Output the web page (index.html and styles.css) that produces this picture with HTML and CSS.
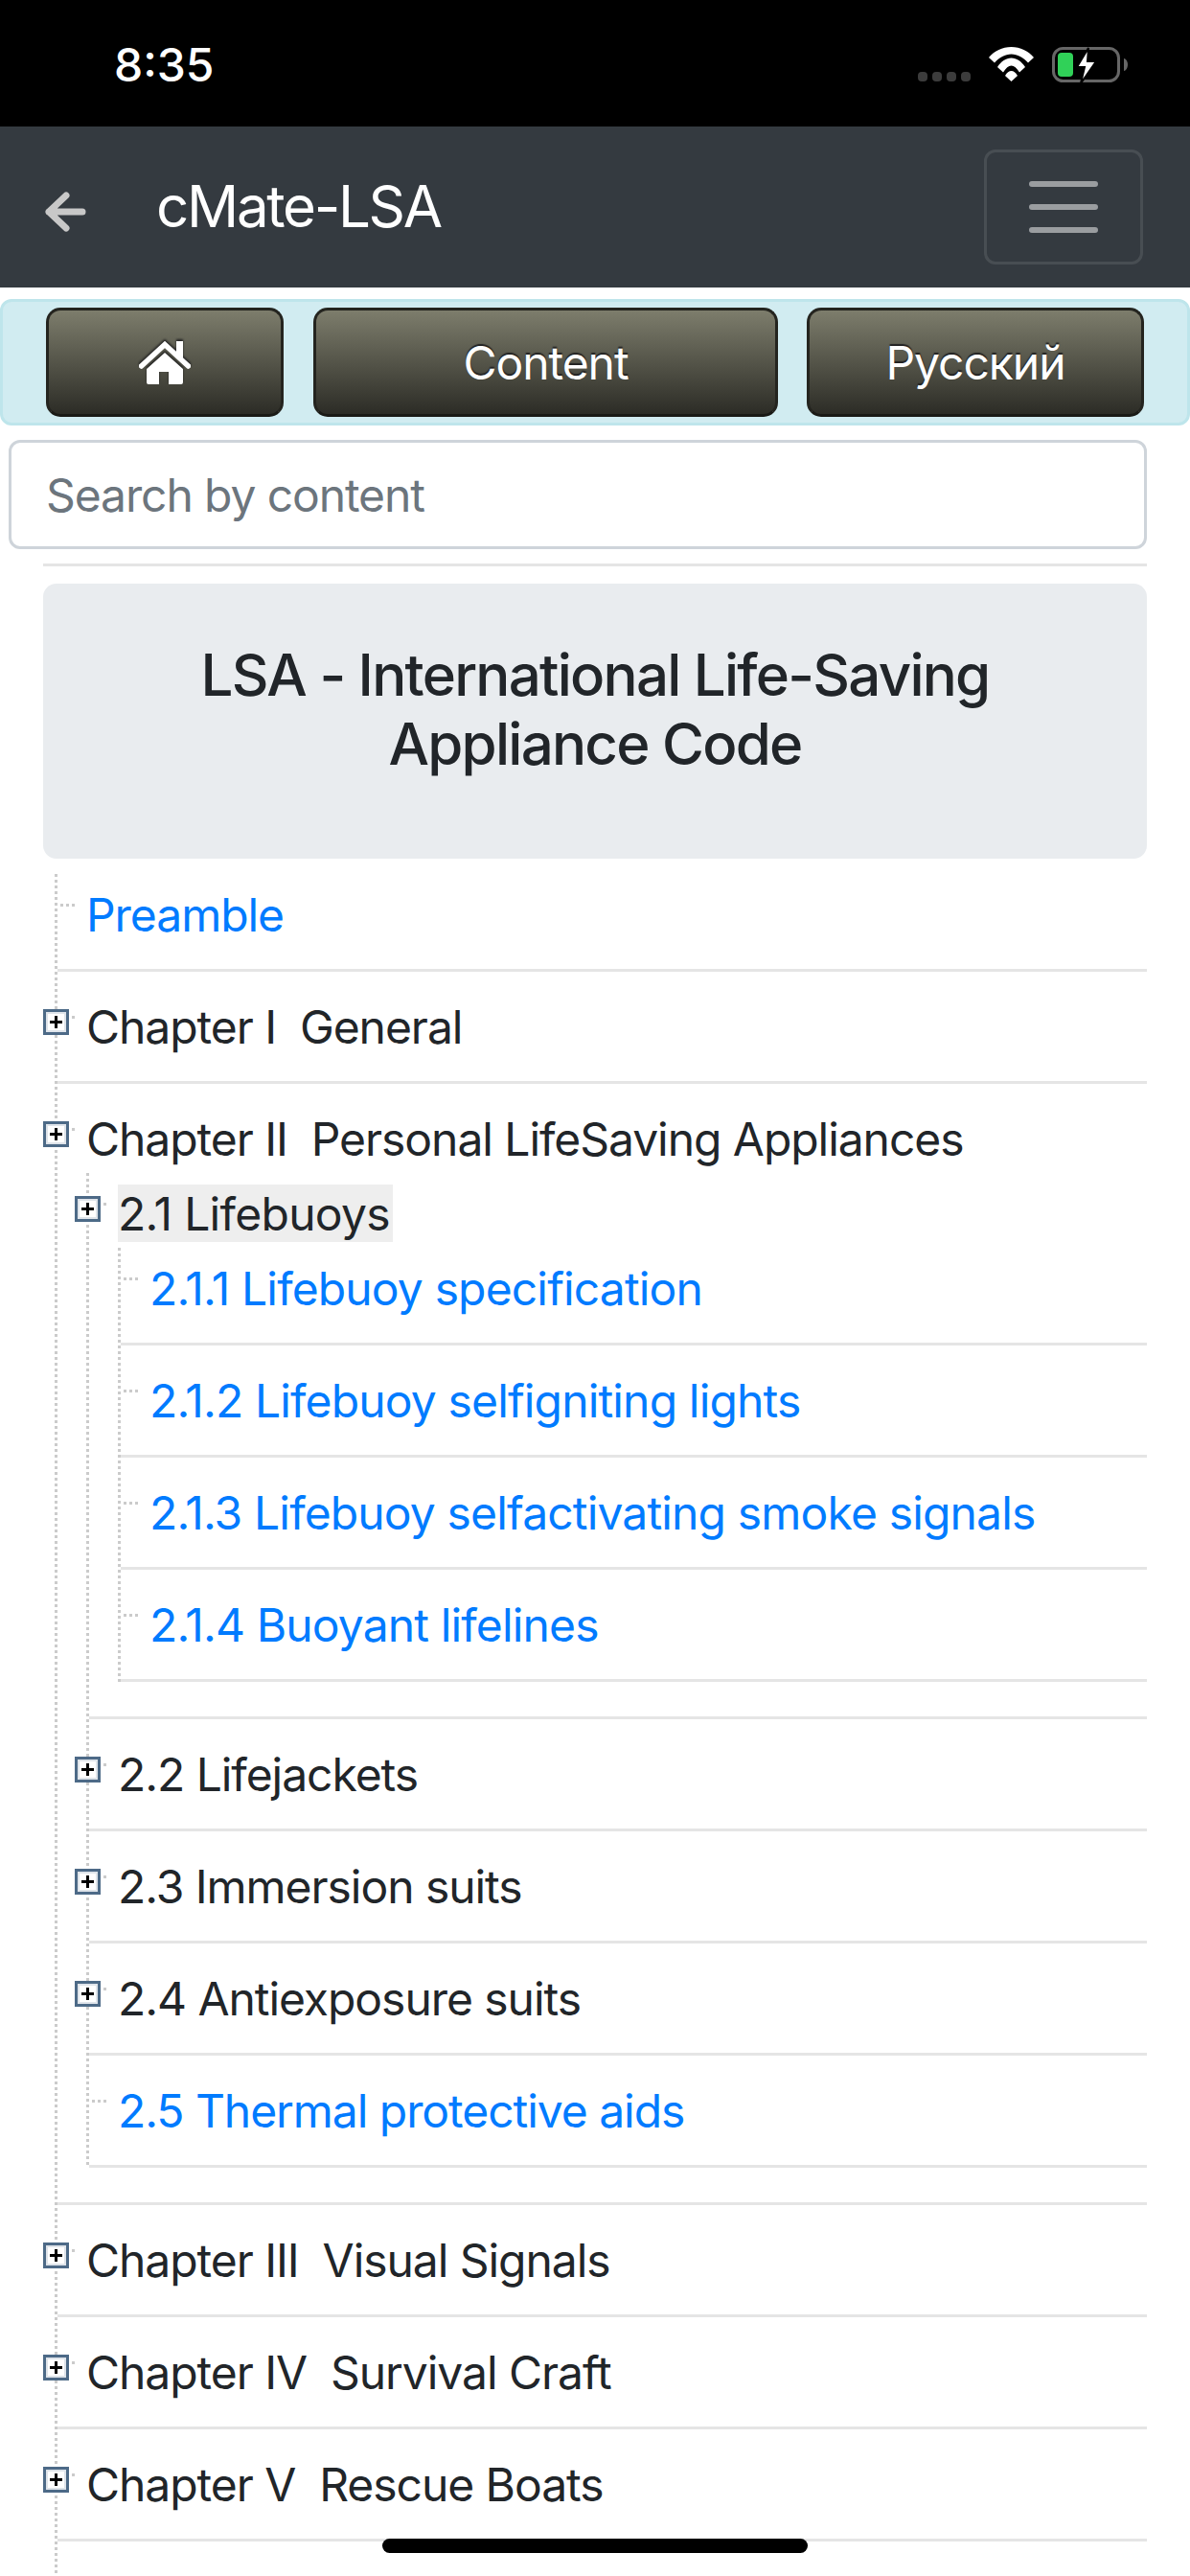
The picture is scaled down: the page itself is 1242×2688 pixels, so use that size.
FILE: index.html
```html
<!DOCTYPE html>
<html lang="en">
<head>
<meta charset="utf-8">
<title>cMate-LSA</title>
<link rel="stylesheet" href="styles.css">
</head>
<body>
<header class="status">
  <span class="time">8:35</span>
  <div class="status-icons">
    <div class="signal"><i></i><i></i><i></i><i></i></div>
    <svg class="wifi" viewBox="0 0 47 36" width="47" height="36"><path fill="#fff" d="M0 11C6 4 14 0 23.500 0S41 4 47 11l-6 5.500C36 11 30 7.500 23.500 7.500S11 11 6 16.500z"/><path fill="#fff" d="M9 21c4-6 9-9.500 14.500-9.500S34 15 38 21l-6 5.500C29 22 26.500 19.500 23.500 19.500S18 22 15 26.500z"/><path fill="#fff" d="M17 30q3-5 6.500-5t6.500 5l-6.500 6z"/></svg>
    <svg class="battery" viewBox="0 0 79 38" width="79" height="38"><rect x="1.500" y="1.500" width="68" height="34" rx="10" fill="none" stroke="#666" stroke-width="3"/><rect x="6" y="6" width="16" height="25" rx="4" fill="#30d158"/><path fill="#666" d="M75 12c2.500.5 4 3.500 4 6.500s-1.500 6-4 6.500z"/><path fill="#fff" stroke="#000" stroke-width="2" d="M38 1 26 21h8l-4 17 16-23h-9z"/></svg>
  </div>
</header>

<nav class="navbar">
  <svg class="back" viewBox="0 0 43 42" width="43" height="42"><path fill="none" stroke="#c8c8c8" stroke-width="7" stroke-linecap="round" stroke-linejoin="round" d="M22 4 4 21l18 17M4 21h35"/></svg>
  <span class="brand">cMate-LSA</span>
  <button class="toggler" type="button" aria-label="Menu"><i></i><i></i><i></i></button>
</nav>

<div class="alert">
  <a class="btn btn-home" aria-label="Home">
    <svg class="home-icon" viewBox="0 0 54 45" width="54" height="45"><path fill="#fff" d="M27 12 8 29v14q0 2 2 2h11V32h10v13h13q2 0 2-2V29z"/><path fill="none" stroke="#fff" stroke-width="5.500" stroke-linecap="round" d="M2.500 26 27 3.500 51.500 26"/><path fill="#fff" d="M39 0h7v18l-7-6z"/></svg>
  </a>
  <a class="btn btn-content">Content</a>
  <a class="btn btn-lang">Русский</a>
</div>

<input class="search" type="text" placeholder="Search by content">

<main class="content">
  <hr class="rule">
  <h1 class="title">LSA - International Life-Saving Appliance Code</h1>
  <ul class="tree root">
    <li class="leaf"><a class="link">Preamble</a></li>
    <li><span class="plus"></span>Chapter I&nbsp; General</li>
    <li class="open"><span class="plus"></span>Chapter II&nbsp; Personal LifeSaving Appliances
      <ul class="tree sub">
        <li class="open selected"><span class="plus"></span><span class="hilite">2.1 Lifebuoys</span>
          <ul class="tree third">
            <li class="leaf"><a class="link">2.1.1 Lifebuoy specification</a></li>
            <li class="leaf"><a class="link">2.1.2 Lifebuoy selfigniting lights</a></li>
            <li class="leaf"><a class="link">2.1.3 Lifebuoy selfactivating smoke signals</a></li>
            <li class="leaf"><a class="link">2.1.4 Buoyant lifelines</a></li>
          </ul>
        </li>
        <li><span class="plus"></span>2.2 Lifejackets</li>
        <li><span class="plus"></span>2.3 Immersion suits</li>
        <li><span class="plus"></span>2.4 Antiexposure suits</li>
        <li class="leaf"><a class="link">2.5 Thermal protective aids</a></li>
      </ul>
    </li>
    <li><span class="plus"></span>Chapter III&nbsp; Visual Signals</li>
    <li><span class="plus"></span>Chapter IV&nbsp; Survival Craft</li>
    <li><span class="plus"></span>Chapter V&nbsp; Rescue Boats</li>
  </ul>
</main>

<div class="home-indicator"></div>
</body>
</html>
```
FILE: styles.css
```css
* { box-sizing: border-box; }
html, body { margin: 0; padding: 0; }
body {
  position: relative;
  width: 1242px;
  height: 2688px;
  overflow: hidden;
  background: #fff;
  color: #212529;
  font-family: Inter, "Noto Sans", sans-serif;
  font-size: 48px;
  line-height: 72px;
  letter-spacing: -1.05px;
}

.status {
  height: 132px;
  background: #000;
  display: flex;
  align-items: flex-start;
  justify-content: space-between;
  padding: 46px 65px 0 119px;
}
.time { color: #fff; font-size: 48px; font-weight: 500; line-height: 44px; letter-spacing: 0; }
.status-icons { display: flex; align-items: flex-start; gap: 19px; padding-top: 3px; }
.signal { display: flex; gap: 5px; padding-top: 26px; }
.signal i { width: 10px; height: 10px; border-radius: 4px; background: #3c3c3c; }

.navbar {
  height: 168px;
  background: #343a40;
  display: flex;
  align-items: center;
  padding: 0 49px 0 47px;
}
.back { margin-top: 9px; }
.brand { color: #fff; font-size: 60px; line-height: 72px; margin-left: 73px; margin-top: -2px; letter-spacing: -2.3px; }
.toggler {
  margin-left: auto;
  width: 166px;
  height: 120px;
  background: none;
  border: 3px solid rgba(255,255,255,.1);
  border-radius: 12px;
  padding: 0;
  display: flex;
  flex-direction: column;
  align-items: center;
  justify-content: center;
  gap: 18px;
}
.toggler i { width: 72px; height: 6px; border-radius: 3px; background: rgba(255,255,255,.5); }

.alert {
  margin-top: 12px;
  height: 132px;
  background: #d1ecf1;
  border: 3px solid #bee5eb;
  border-radius: 12px;
  display: flex;
  align-items: center;
  padding-left: 45px;
}
.btn {
  height: 114px;
  padding-top: 2px;
  border: 3px solid #24241f;
  border-bottom-color: #1a1a16;
  border-radius: 15px;
  background: linear-gradient(#7d7d6c, #2c2c26);
  color: #fff;
  text-shadow: 0 -2px 1px #222;
  display: flex;
  align-items: center;
  justify-content: center;
}
.btn-home { width: 248px; margin-right: 31px; padding-top: 0; }
.btn-content { width: 485px; margin-right: 30px; }
.btn-lang { width: 352px; }
.home-icon { margin-left: -1px; filter: drop-shadow(0 -2px 1px #222); }

.search {
  display: block;
  margin: 15px 0 0 9px;
  width: 1188px;
  height: 114px;
  border: 3px solid #ced4da;
  border-radius: 12px;
  padding: 0 36px;
  font: 48px Inter, "Noto Sans", sans-serif;
  letter-spacing: -1.1px;
  color: #495057;
  background: #fff;
  outline: none;
}
.search::placeholder { color: #6c757d; opacity: 1; }

.content { margin: 0 45px; }
.rule { margin: 15px 0 0; border: 0; height: 3px; background: #e5e5e5; }
.title {
  margin: 18px 0 0;
  height: 287px;
  padding: 59px 60px 0;
  background: #e9ecef;
  border-radius: 14px;
  font-size: 60px;
  font-weight: 500;
  line-height: 72px;
  letter-spacing: -1.75px;
  text-align: center;
}

.tree {
  list-style: none;
  margin: 0;
  padding: 0 0 0 3px;
  background: repeating-linear-gradient(to bottom, #cbcbcb 0 3px, transparent 3px 6px) left 15px / 3px 100% no-repeat;
}
.root { margin: 1px 0 0 12px; height: 1791px; }
.sub { margin-top: -16px; }
.third { margin-top: -9px; letter-spacing: -0.85px; }
.tree > li {
  position: relative;
  min-height: 117px;
  padding: 22px 0 20px 30px;
  border-bottom: 3px solid #e5e5e5;
}
.tree > li.open { padding-bottom: 36px; }
.tree > li.selected { padding-top: 27px; }
.tree > li::before {
  content: "";
  position: absolute;
  left: 0;
  top: 46px;
  width: 18px;
  height: 3px;
  background: repeating-linear-gradient(to right, transparent 0 3px, #cbcbcb 3px 6px);
}
.plus {
  position: absolute;
  left: -15px;
  top: 39px;
  width: 27px;
  height: 27px;
  border: 3px solid #4d6a87;
  background:
    linear-gradient(#000, #000) center / 13px 3px no-repeat,
    linear-gradient(#000, #000) center / 3px 13px no-repeat,
    #fff;
  box-shadow: inset 0 0 0 2px #dfe4ea;
}
.link { color: #007bff; }
.hilite { display: block; width: fit-content; height: 60px; line-height: 62px; background: #eee; letter-spacing: -0.7px; padding-right: 3px; }

.home-indicator {
  position: absolute;
  left: 399px;
  top: 2649px;
  width: 444px;
  height: 15px;
  border-radius: 8px;
  background: #000;
}
```
